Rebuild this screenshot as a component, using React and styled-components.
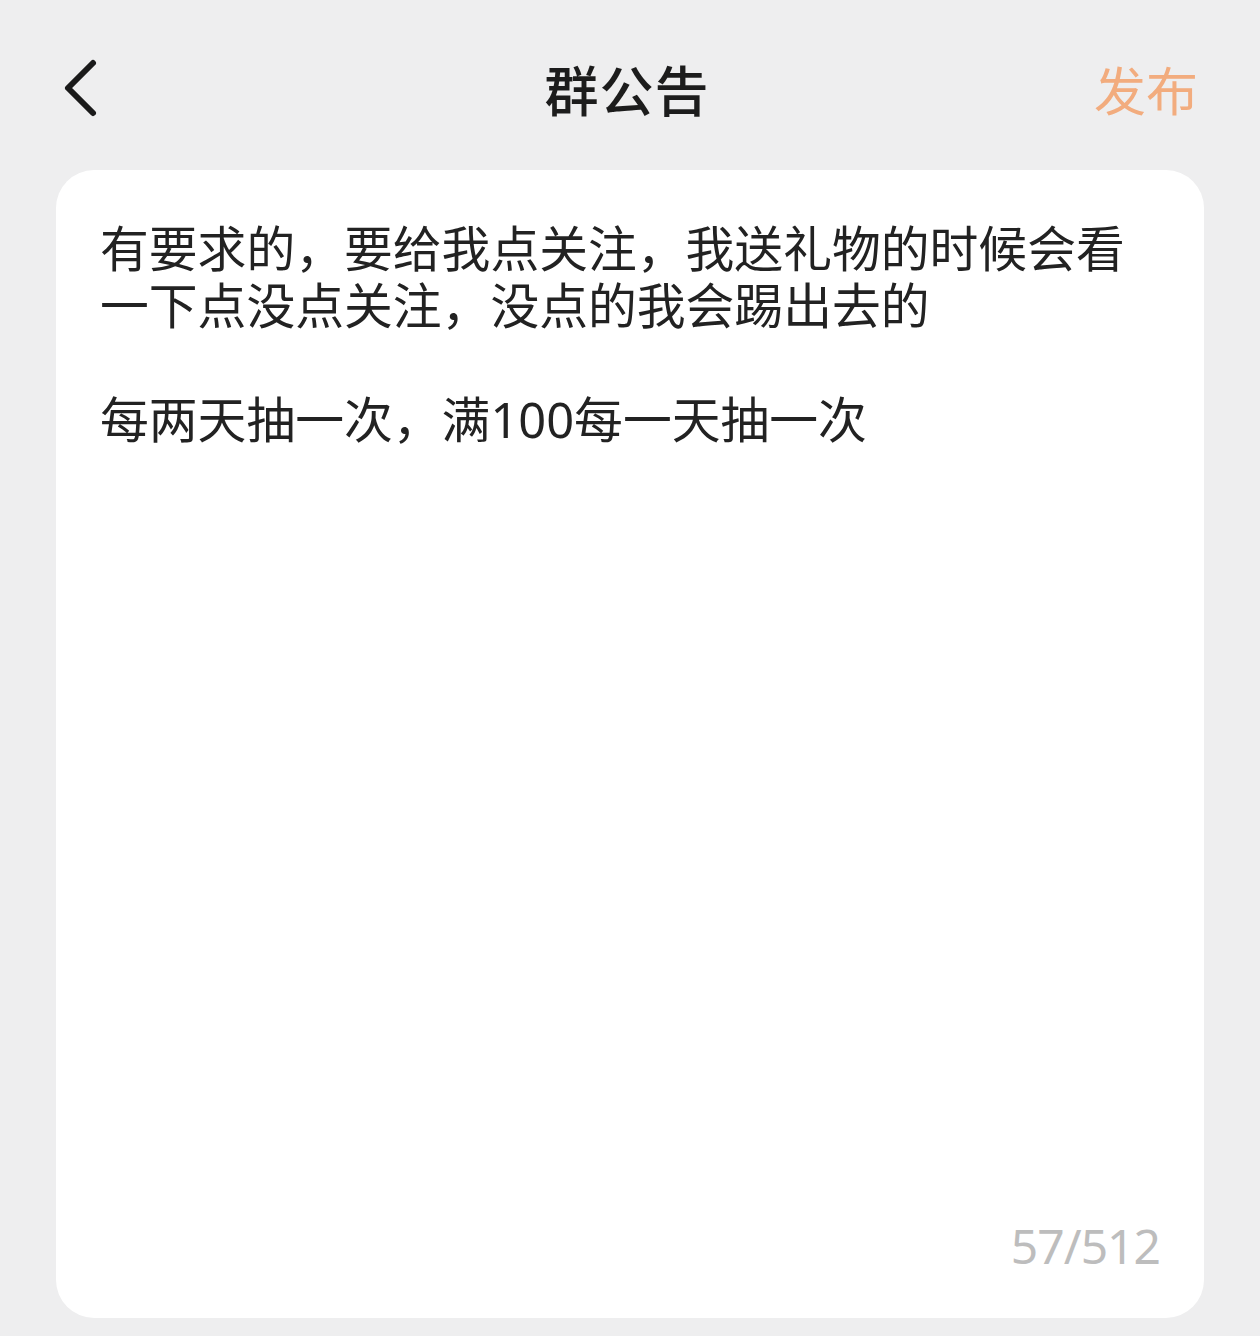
import React from 'react';
import styled, { createGlobalStyle } from 'styled-components';

const GlobalStyle = createGlobalStyle`
  html, body {
    margin: 0;
    padding: 0;
    background: #EEEEEF;
    font-family: "Noto Sans", "Noto Sans CJK SC", sans-serif;
  }
`;

const Page = styled.div`
  width: 1260px;
  height: 1336px;
  display: flex;
  flex-direction: column;
  background: #EEEEEF;
`;

const Header = styled.div`
  height: 170px;
  display: grid;
  grid-template-columns: 1fr auto 1fr;
  align-items: center;
  padding: 6px 60px 0 54px;
  box-sizing: border-box;
`;

const BackButton = styled.button`
  justify-self: start;
  margin-left: 8px;
  width: 44px;
  height: 60px;
  padding: 0;
  border: none;
  background: none;
  display: flex;
  align-items: center;
`;

const Title = styled.div`
  font-family: "Noto Sans CJK SC", sans-serif;
  font-size: 54px;
  font-weight: 500;
  color: #1c1c1c;
  letter-spacing: 1px;
`;

const Publish = styled.div`
  justify-self: end;
  margin-right: 2px;
  font-family: "Noto Sans CJK SC", sans-serif;
  font-size: 52px;
  color: #F2AC7E;
`;

const Card = styled.div`
  margin: 0 56px;
  height: 1148px;
  background: #ffffff;
  border-radius: 38px;
  padding: 50px 44px 44px 44px;
  box-sizing: border-box;
  display: flex;
  flex-direction: column;
`;

const Content = styled.div`
  flex: 1;
  font-family: "Noto Sans", "Noto Sans CJK SC", sans-serif;
  font-size: 48.8px;
  line-height: 57px;
  color: #222222;
  white-space: pre-wrap;
`;

const Counter = styled.div`
  align-self: flex-end;
  font-family: "Noto Sans", sans-serif;
  font-size: 48px;
  line-height: 56px;
  color: #BDBDBD;
  letter-spacing: -1px;
`;

const TEXT =
  '有要求的，要给我点关注，我送礼物的时候会看一下点没点关注，没点的我会踢出去的\n\n每两天抽一次，满100每一天抽一次';

function App() {
  return (
    <Page>
      <GlobalStyle />
      <Header>
        <BackButton>
          <svg width="40" height="60" viewBox="0 0 40 60">
            <path
              d="M31 5 L6 30 L31 55"
              fill="none"
              stroke="#1a1a1a"
              strokeWidth="6"
              strokeLinecap="round"
              strokeLinejoin="round"
            />
          </svg>
        </BackButton>
        <Title>群公告</Title>
        <Publish>发布</Publish>
      </Header>
      <Card>
        <Content>{TEXT}</Content>
        <Counter>57/512</Counter>
      </Card>
    </Page>
  );
}

export default App;
